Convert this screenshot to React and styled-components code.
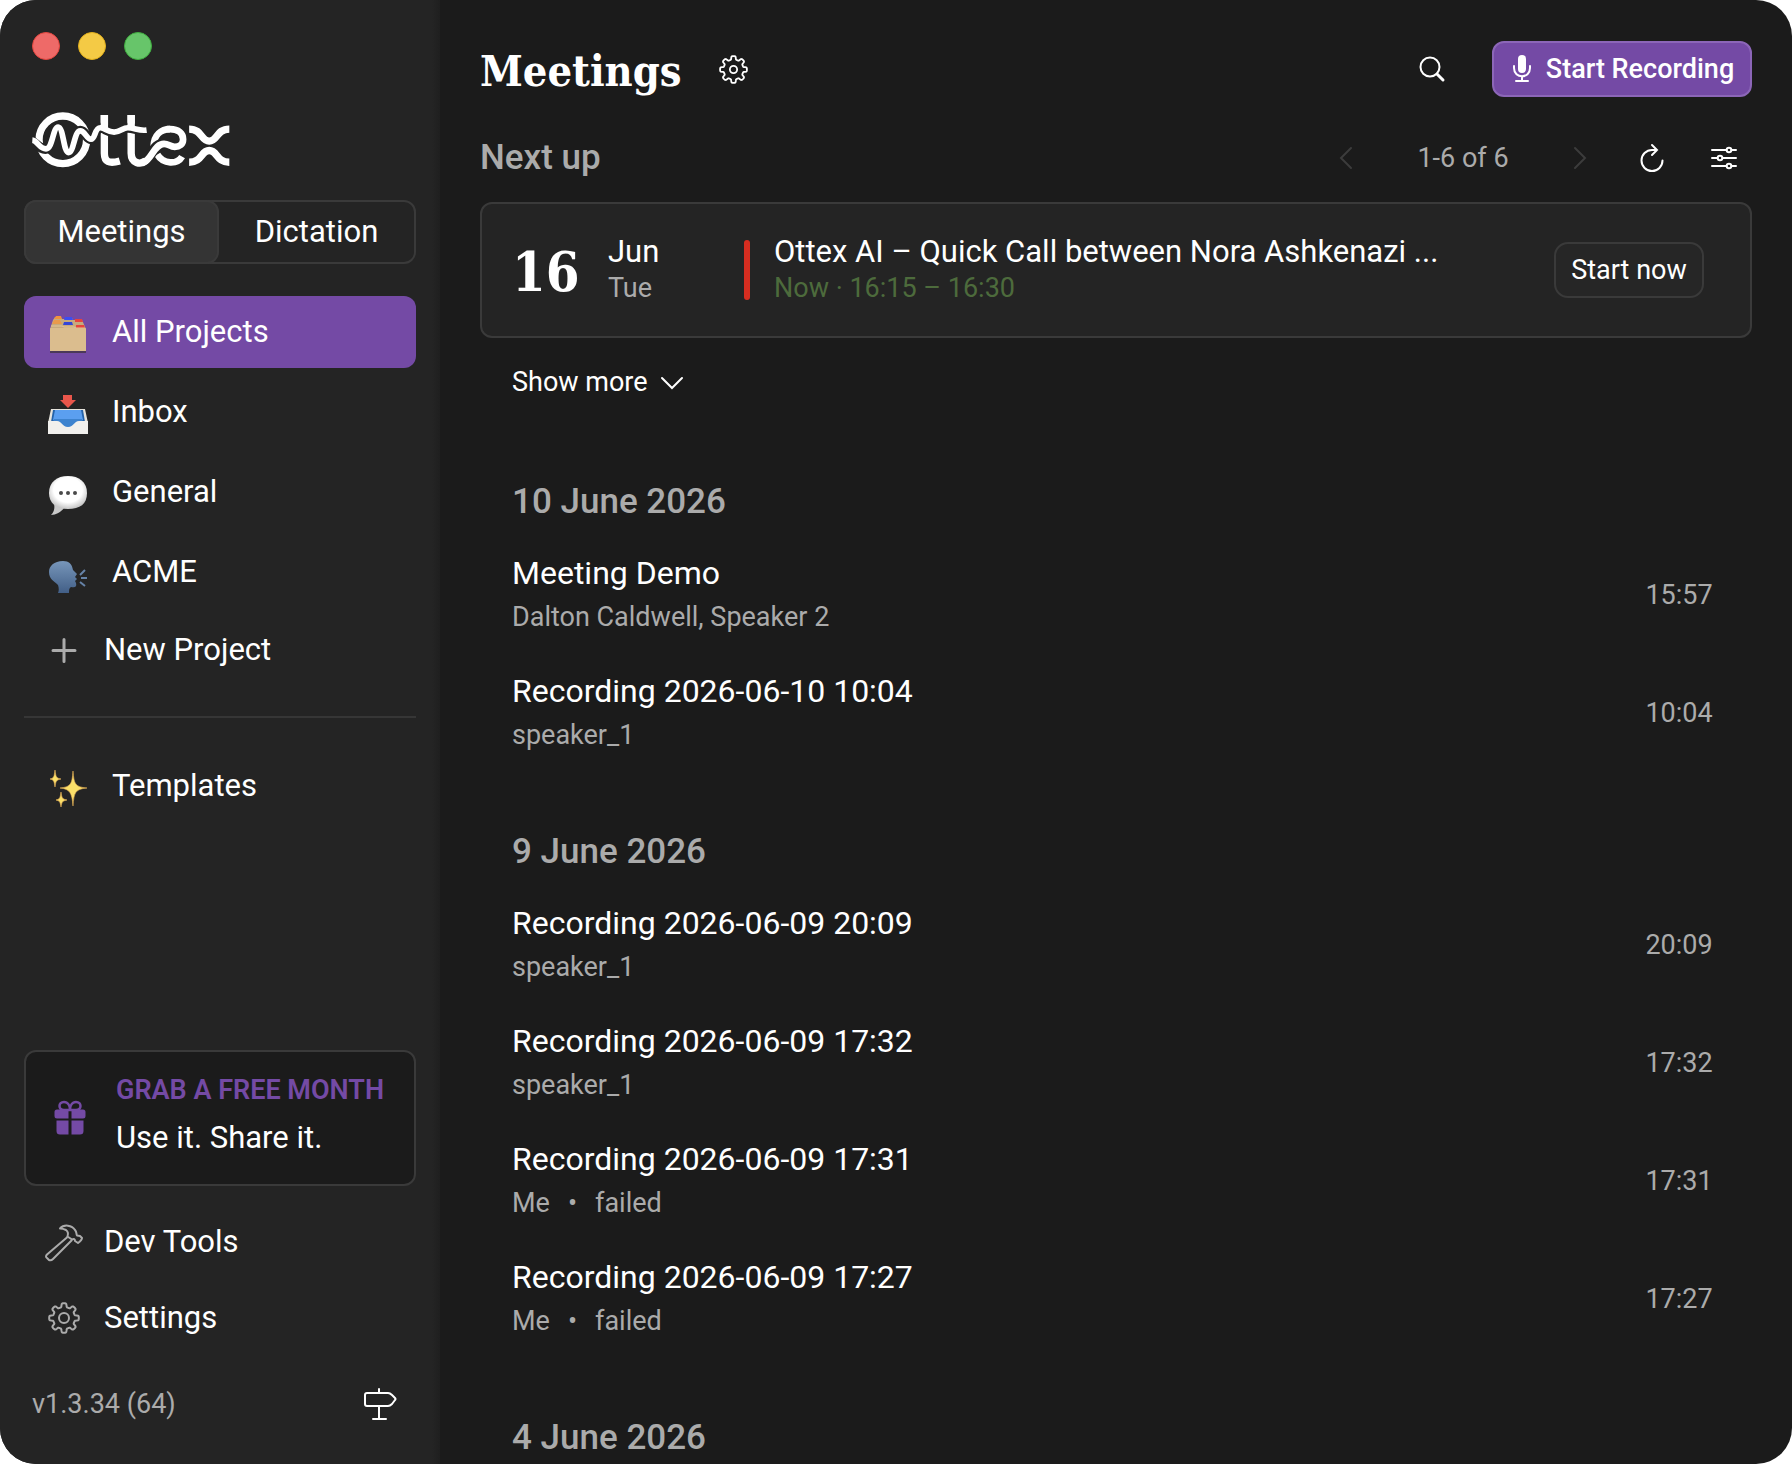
import React from "react";
import styled, { createGlobalStyle, ThemeProvider } from "styled-components";

const theme = {
  colors: {
    main: "#1b1b1b",
    panel: "#242424",
    segment: "#343434",
    border: "#3a3a3a",
    divider: "#363636",
    accent: "#744aa5",
    accentBorder: "#8c66b8",
    text: "#ffffff",
    muted: "#ababab",
    disabled: "#3c3c3c",
    now: "#4d6b3c",
    event: "#d62d20",
  },
  font: {
    body: `Roboto, "Liberation Sans", sans-serif`,
    display: `"Roboto Slab", "DejaVu Serif Condensed", "DejaVu Serif", serif`,
  },
};

const GlobalStyle = createGlobalStyle`
  * {
    box-sizing: border-box;
    margin: 0;
    padding: 0;
  }

  body {
    background: #ffffff;
  }

  button {
    font: inherit;
    color: inherit;
    background: none;
    border: none;
    cursor: pointer;
  }

  a {
    color: inherit;
    text-decoration: none;
  }

  ul {
    list-style: none;
  }

  svg {
    display: block;
    flex: none;
  }
`;

const Window = styled.div`
  display: flex;
  height: 100vh;
  overflow: hidden;
  border-radius: 36px;
  background: ${({ theme }) => theme.colors.main};
  color: ${({ theme }) => theme.colors.text};
  font-family: ${({ theme }) => theme.font.body};
  font-size: 32px;
  line-height: 40px;
`;

/* Sidebar */

const Sidebar = styled.aside`
  display: flex;
  flex-direction: column;
  flex: 0 0 440px;
  padding: 32px 24px;
  background: linear-gradient(to right, #242424 calc(100% - 8px), #1f1f1f);
  font-size: 31px;
`;

const TrafficLights = styled.div`
  display: flex;
  gap: 18px;
  padding-left: 8px;
`;

const Light = styled.button`
  width: 28px;
  height: 28px;
  border-radius: 50%;
  background: ${({ $color }) => $color};
  border: 1px solid ${({ $edge }) => $edge};
`;

const LogoLink = styled.a`
  margin: 52px 0 32px 8px;
`;

const Segmented = styled.div`
  display: flex;
  height: 64px;
  margin-bottom: 32px;
  border: 2px solid ${({ theme }) => theme.colors.border};
  border-radius: 12px;
`;

const Segment = styled.button`
  flex: 1 1 50%;
  margin: ${({ $active }) => ($active ? "-2px 0 -2px -2px" : "0")};
  border-radius: 12px;
  border: ${({ $active, theme }) => ($active ? `2px solid ${theme.colors.border}` : "none")};
  background: ${({ $active, theme }) => ($active ? theme.colors.segment : "transparent")};
`;

const NavList = styled.ul`
  display: flex;
  flex-direction: column;
  gap: 8px;
`;

const NavLink = styled.a`
  display: flex;
  align-items: center;
  gap: 24px;
  height: 72px;
  padding: 0 24px;
  border-radius: 12px;
  background: ${({ $active, theme }) => ($active ? theme.colors.accent : "transparent")};

  svg {
    margin-top: 6px;
  }
`;

const ToolButton = styled.button`
  display: flex;
  align-items: center;
  gap: 20px;
  width: 100%;
  height: ${({ $tall }) => ($tall ? "76px" : "68px")};
  padding: 0 20px;
  text-align: left;

  svg {
    color: ${({ theme }) => theme.colors.muted};
  }
`;

const Divider = styled.hr`
  flex: none;
  height: 2px;
  margin: 32px 0;
  border: none;
  background: ${({ theme }) => theme.colors.divider};
`;

const Promo = styled.a`
  display: flex;
  align-items: center;
  gap: 30px;
  height: 136px;
  margin: auto 0 18px;
  padding: 0 28px;
  border: 2px solid ${({ theme }) => theme.colors.border};
  border-radius: 12px;
  background: ${({ theme }) => theme.colors.main};
`;

const PromoText = styled.span`
  display: flex;
  flex-direction: column;
  gap: 8px;
  padding-bottom: 8px;
  white-space: nowrap;
`;

const PromoTitle = styled.strong`
  color: ${({ theme }) => theme.colors.accent};
  font-size: 27px;
  font-weight: 600;
`;

const Footer = styled.footer`
  display: flex;
  align-items: center;
  justify-content: space-between;
  height: 56px;
  margin-top: 20px;
  padding: 0 8px;
  color: ${({ theme }) => theme.colors.muted};
  font-size: 27px;
`;

/* Main column */

const Main = styled.main`
  flex: 1;
  min-width: 0;
  overflow: hidden;
  padding: 40px 40px 0;
`;

const Header = styled.header`
  display: flex;
  align-items: center;
  height: 58px;
  margin-bottom: 32px;
`;

const Title = styled.h1`
  margin-right: 24px;
  padding-top: 4px;
  font-family: ${({ theme }) => theme.font.display};
  font-size: 43px;
  font-weight: 700;
`;

const IconButton = styled.button`
  display: flex;
  align-items: center;
  justify-content: center;
  width: 56px;
  height: 56px;

  &:disabled {
    color: ${({ theme }) => theme.colors.disabled};
    cursor: default;
  }
`;

const RecordButton = styled.button`
  display: flex;
  align-items: center;
  justify-content: center;
  gap: 12px;
  width: 260px;
  height: 56px;
  margin-left: 32px;
  border: 2px solid ${({ theme }) => theme.colors.accentBorder};
  border-radius: 12px;
  background: ${({ theme }) => theme.colors.accent};
  font-size: 27px;
  font-weight: 500;
  white-space: nowrap;
`;

const Spacer = styled.div`
  flex: 1;
`;

const Toolbar = styled.div`
  display: flex;
  align-items: center;
  margin-bottom: 16px;
`;

const SectionTitle = styled.h2`
  color: ${({ theme }) => theme.colors.muted};
  font-size: 35px;
  font-weight: 500;
`;

const Pager = styled.div`
  display: flex;
  align-items: center;
  margin-right: 16px;
`;

const PageCount = styled.span`
  width: 178px;
  text-align: center;
  color: ${({ theme }) => theme.colors.muted};
  font-size: 27px;
`;

const ToolbarActions = styled.div`
  display: flex;
  gap: 16px;
`;

const EventCard = styled.article`
  display: grid;
  grid-template-columns: 96px 136px 6px minmax(0, 1fr) auto;
  align-items: center;
  height: 136px;
  padding: 0 46px 0 30px;
  border: 2px solid ${({ theme }) => theme.colors.border};
  border-radius: 12px;
  background: ${({ theme }) => theme.colors.panel};
`;

const Day = styled.span`
  padding-top: 4px;
  font-family: ${({ theme }) => theme.font.display};
  font-size: 54px;
  font-weight: 700;
`;

const Stack = styled.div`
  display: flex;
  flex-direction: column;
  min-width: 0;
  line-height: 36px;
  font-size: 31px;
`;

const EventBar = styled.span`
  height: 60px;
  border-radius: 3px;
  background: ${({ theme }) => theme.colors.event};
`;

const EventInfo = styled(Stack)`
  padding: 0 24px;
`;

const EventTitle = styled.h3`
  overflow: hidden;
  font-size: 31px;
  font-weight: 400;
  text-overflow: ellipsis;
  white-space: nowrap;
`;

const Small = styled.span`
  color: ${({ $now, theme }) => ($now ? theme.colors.now : theme.colors.muted)};
  font-size: 27px;
`;

const StartButton = styled.button`
  width: 150px;
  height: 56px;
  border: 2px solid ${({ theme }) => theme.colors.border};
  border-radius: 14px;
  background: #262626;
  font-size: 27px;
`;

const ShowMore = styled.button`
  display: flex;
  align-items: center;
  gap: 12px;
  height: 56px;
  margin: 16px 32px 12px;
  font-size: 27px;
`;

const Group = styled.section`
  padding: 60px 32px 0;
`;

const GroupTitle = styled(SectionTitle)`
  margin-bottom: 14px;
`;

const MeetingLink = styled.a`
  display: flex;
  align-items: center;
  justify-content: space-between;
  height: 118px;
`;

const MeetingText = styled.div`
  display: flex;
  flex-direction: column;
  gap: 4px;
`;

const Meta = styled.span`
  display: flex;
  gap: 18px;
  color: ${({ theme }) => theme.colors.muted};
  font-size: 27px;
`;

const Time = styled.time`
  width: 82px;
  text-align: center;
  color: ${({ theme }) => theme.colors.muted};
  font-size: 27px;
`;

/* Icons */

// Eight soft teeth around a circle, sampled as a closed outline
const gearOutline = (() => {
  const points = [];
  for (let i = 0; i < 160; i++) {
    const a = (i / 160) * Math.PI * 2;
    const r = 12.9 + 1.9 * Math.tanh(3 * Math.cos(8 * a));
    points.push(`${(16 + r * Math.sin(a)).toFixed(2)} ${(16 - r * Math.cos(a)).toFixed(2)}`);
  }
  return `M${points.join("L")}Z`;
})();

const Gear = ({ size, inset = 0, hole = 5 }) => (
  <svg
    width={size}
    height={size}
    viewBox={`${-inset} ${-inset} ${32 + inset * 2} ${32 + inset * 2}`}
    fill="none"
    stroke="currentColor"
    strokeWidth="2"
    strokeLinejoin="round"
  >
    <path d={gearOutline} />
    <circle cx="16" cy="16" r={hole} />
  </svg>
);

const Logo = () => (
  <svg width="198" height="56" viewBox="38 37 591 167" fill="none" stroke="#fff" strokeWidth="22" role="img" aria-label="Ottex">
    <circle cx="130" cy="120" r="71" />
    <path d="M254 46V160C254 186 268 192 300 183" />
    <path d="M334 46V160C334 190 362 196 378 182" />
    <path d="M401 140C402 104 424 88 450 88" strokeWidth="20" />
    <path d="M412 164C430 194 472 194 486 170" strokeWidth="20" />
    <path
      d="M24 117C42 120 54 147 78 147C100 147 100 82 116 82C132 82 132 158 147 158C163 158 164 93 182 93C196 93 201 118 214 118C228 118 224 84 242 84C256 84 264 97 283 97C302 97 308 84 324 84C344 84 356 94 390 91"
      stroke="#242424"
      strokeWidth="30"
    />
    <path d="M254 46V88M334 46V88" />
    <path
      d="M39 121C54 122 60 147 80 147C100 147 100 82 116 82C132 82 132 158 147 158C163 158 164 93 182 93C196 93 201 118 214 118C228 118 224 84 242 84C256 84 264 97 283 97C302 97 308 84 324 84C344 84 356 94 380 91"
      strokeWidth="17"
    />
    <path d="M392 164C404 144 414 131 436 131" stroke="#242424" strokeWidth="31" />
    <path
      d="M440 88H450C476 88 489 101 489 118C489 134 478 141 464 141C450 141 446 132 432 132C408 132 400 162 382 180C376 186 370 187 362 187"
      strokeWidth="20"
    />
    <path d="M507 88C546 88 542 124 567 124C592 124 588 88 627 88M507 187C546 187 542 152 567 152C592 152 588 187 627 187" />
  </svg>
);

const FolderIcon = () => (
  <svg width="40" height="40" viewBox="0 0 40 40">
    <path d="M5 5L7 2H12L14 4H17L18 3H24L25 5H34L38 14H2Z" fill="#c7aa7d" />
    <path d="M8 1H13L14 4H6Z" fill="#f0923f" />
    <path d="M17 2H24L25 5H16Z" fill="#3d4df0" />
    <path d="M27 4H34L35 7H27Z" fill="#e8433d" />
    <path d="M6 5H12L14 9H4Z" fill="#e99a4c" />
    <path d="M16 7H24L25 10H15Z" fill="#3346d8" />
    <path d="M28 10H36L37 13H28Z" fill="#e8433d" />
    <path d="M3 11H14L16 12H26L28 13H37" fill="none" stroke="#e3c79a" />
    <rect x="2" y="13" width="36" height="24" rx="1" fill="#dbbd8e" />
    <path d="M2 37H38" stroke="#4b3858" strokeWidth="2" />
  </svg>
);

const InboxIcon = () => (
  <svg width="40" height="40" viewBox="0 0 40 40">
    <path d="M3 14H37L40 28V39H0V28Z" fill="#e5e3dc" />
    <path d="M5 15H35L37 27H3Z" fill="#2462a8" />
    <path d="M7 15H33L35 25H5Z" fill="#5b9ff0" />
    <path d="M6 24H34L37 32H3Z" fill="#3d83cf" />
    <path d="M0 26H9C14 26 14 32 20 32C26 32 26 26 31 26H40V39H0Z" fill="#f1f0ed" />
    <path d="M15 0H24V5H28L20 13L12 5H15Z" fill="#e9564b" />
  </svg>
);

const ChatIcon = () => (
  <svg width="40" height="40" viewBox="0 0 40 40">
    <defs>
      <radialGradient id="bubble" cx="50%" cy="42%" r="58%">
        <stop offset="65%" stopColor="#ffffff" />
        <stop offset="100%" stopColor="#c6c6c6" />
      </radialGradient>
    </defs>
    <path d="M6 29C7 33 6 37 3 40C8 40 13 37 16 33Z" fill="#c9c9c9" />
    <path d="M20 1C31 1 39 7 39 18C39 29 32 34 20 34C8 34 1 28 1 18C1 7 9 1 20 1Z" fill="url(#bubble)" />
    <g fill="#4a4a4a">
      <circle cx="13" cy="18" r="2" />
      <circle cx="20" cy="18" r="2" />
      <circle cx="27" cy="18" r="2" />
    </g>
  </svg>
);

const SpeakingIcon = () => (
  <svg width="40" height="40" viewBox="0 0 40 40">
    <defs>
      <linearGradient id="head" x1="0" y1="0" x2="0" y2="1">
        <stop offset="0%" stopColor="#7796ba" />
        <stop offset="100%" stopColor="#425f87" />
      </linearGradient>
    </defs>
    <path
      d="M15 6C6 6 1 11 1 17C1 24 6 26 10 30C11 33 11 36 10 38H21C21 35 21 33 23 32C27 33 29 32 28 28L27 26L29 24L27 22L29 19L25 15C24 9 21 6 15 6Z"
      fill="url(#head)"
    />
    <path d="M32 20L37 15M33 23H39M32 27L37 31" stroke="#6683a8" strokeWidth="2" />
  </svg>
);

const SparklesIcon = () => (
  <svg width="40" height="40" viewBox="0 0 40 40" fill="#fbe06a" stroke="#e6ae55" strokeWidth="0.6">
    <path d="M25 2C26 15 27 18 39 19C27 20 26 24 25 37C24 24 22 20 12 19C23 18 24 15 25 2Z" />
    <path d="M7 1C8 8 8 9 13 10C8 11 8 12 7 18C6 12 6 11 2 10C6 9 6 8 7 1Z" />
    <path d="M13 23C14 29 14 30 19 31C14 32 14 33 13 38C12 33 12 32 8 31C12 30 12 29 13 23Z" />
  </svg>
);

const PlusIcon = () => (
  <svg width="40" height="40" viewBox="0 0 40 40" stroke="currentColor" strokeWidth="3" strokeLinecap="round">
    <path d="M20 9.500V31.500M9 20.500H31" />
  </svg>
);

const HammerIcon = () => (
  <svg width="40" height="40" viewBox="0 0 40 40" fill="none" stroke="currentColor" strokeWidth="2" strokeLinejoin="round">
    <path d="M23.500 15L3 32.500Q1 34.500 3 36L5 38Q7 39 9 37L28 18" />
    <path d="M16 6.500C20 2 28 3 31 8C33 10 32 12 33 13.500L36 14L38 16Q38 18 34 21L31 19Q31 16 28 17.500L23.500 14.500Q25 10 22 8Q19 6.500 16 6.500Z" />
  </svg>
);

const GiftIcon = () => (
  <svg width="32" height="36" viewBox="0 0 32 36">
    <path d="M16 10H10C4 10 4 2 10 2C14 2 16 6 16 10ZM16 10H22C28 10 28 2 22 2C18 2 16 6 16 10Z" fill="none" stroke="#744aa5" strokeWidth="2.500" />
    <path d="M3 9.500H14.500V18.500H3Q0.500 18.500 0.500 16V12Q0.500 9.500 3 9.500ZM17.500 9.500H29Q31.500 9.500 31.500 12V16Q31.500 18.500 29 18.500H17.500ZM2.500 20.500H14.500V34.500H6Q2.500 34.500 2.500 31ZM17.500 20.500H29.500V31Q29.500 34.500 26 34.500H17.500Z" fill="#744aa5" />
  </svg>
);

const SignpostIcon = () => (
  <svg width="36" height="36" viewBox="0 0 36 36" fill="none" stroke="#fff" strokeWidth="2" strokeLinecap="round" strokeLinejoin="round">
    <path d="M5 7H26Q28 7 30 9L33 12Q34 13 33 14L30 18Q28 20 26 20H5Q3 20 3 18V9Q3 7 5 7ZM17 3V7M17 20V33M11 33H24" />
  </svg>
);

const SearchIcon = () => (
  <svg width="28" height="28" viewBox="0 0 28 28" fill="none" stroke="currentColor" strokeWidth="2" strokeLinecap="round">
    <circle cx="12" cy="12" r="9.500" />
    <path d="M19 19L25 25" strokeWidth="3" />
  </svg>
);

const MicIcon = () => (
  <svg width="24" height="32" viewBox="0 0 24 32" fill="none" stroke="currentColor" strokeWidth="2" strokeLinecap="round">
    <rect x="8" y="2" width="8" height="18" rx="4" fill="currentColor" stroke="none" />
    <path d="M4 13V15C4 26 20 26 20 15V13M12 24V28M6 28H18" />
  </svg>
);

const Chevron = ({ d }) => (
  <svg width="24" height="24" viewBox="0 0 24 24" fill="none" stroke="currentColor" strokeWidth="2" strokeLinecap="round">
    <path d={d} />
  </svg>
);

const RefreshIcon = () => (
  <svg width="28" height="32" viewBox="0 0 28 32" fill="none" stroke="currentColor" strokeWidth="2" strokeLinecap="round">
    <path d="M19 8H14A10.500 10.500 0 1 0 24.500 18.500M14 3L19 8L14 13" />
  </svg>
);

const SlidersIcon = () => (
  <svg width="28" height="28" viewBox="0 0 28 28" fill="none" stroke="currentColor" strokeWidth="2" strokeLinecap="round">
    <path d="M2 6H16M22 6H26M2 14H7M13 14H26M2 22H16M22 22H26" />
    <circle cx="19" cy="6" r="2.300" />
    <circle cx="10" cy="14" r="2.300" />
    <circle cx="19" cy="22" r="2.300" />
  </svg>
);

/* Data */

const projects = [
  { name: "All Projects", icon: <FolderIcon />, active: true },
  { name: "Inbox", icon: <InboxIcon /> },
  { name: "General", icon: <ChatIcon /> },
  { name: "ACME", icon: <SpeakingIcon /> },
];

const groups = [
  {
    date: "10 June 2026",
    meetings: [
      { title: "Meeting Demo", meta: ["Dalton Caldwell, Speaker 2"], time: "15:57" },
      { title: "Recording 2026-06-10 10:04", meta: ["speaker_1"], time: "10:04" },
    ],
  },
  {
    date: "9 June 2026",
    meetings: [
      { title: "Recording 2026-06-09 20:09", meta: ["speaker_1"], time: "20:09" },
      { title: "Recording 2026-06-09 17:32", meta: ["speaker_1"], time: "17:32" },
      { title: "Recording 2026-06-09 17:31", meta: ["Me", "•", "failed"], time: "17:31" },
      { title: "Recording 2026-06-09 17:27", meta: ["Me", "•", "failed"], time: "17:27" },
    ],
  },
  { date: "4 June 2026", meetings: [] },
];

const App = () => {
  return (
    <ThemeProvider theme={theme}>
      <GlobalStyle />
      <Window>
        <Sidebar>
          <TrafficLights>
            <Light $color="#ee6a68" $edge="#e2463f" aria-label="Close" />
            <Light $color="#f4ca45" $edge="#e3b01c" aria-label="Minimize" />
            <Light $color="#67c56a" $edge="#3fae3f" aria-label="Zoom" />
          </TrafficLights>
          <LogoLink href="#home">
            <Logo />
          </LogoLink>
          <Segmented>
            <Segment $active>Meetings</Segment>
            <Segment>Dictation</Segment>
          </Segmented>
          <nav>
            <NavList>
              {projects.map((project) => (
                <li key={project.name}>
                  <NavLink href="#project" $active={project.active}>
                    {project.icon}
                    {project.name}
                  </NavLink>
                </li>
              ))}
              <li>
                <ToolButton>
                  <PlusIcon />
                  New Project
                </ToolButton>
              </li>
            </NavList>
            <Divider />
            <NavLink href="#templates">
              <SparklesIcon />
              Templates
            </NavLink>
          </nav>
          <Promo href="#promo">
            <GiftIcon />
            <PromoText>
              <PromoTitle>GRAB A FREE MONTH</PromoTitle>
              Use it. Share it.
            </PromoText>
          </Promo>
          <ToolButton $tall>
            <HammerIcon />
            Dev Tools
          </ToolButton>
          <ToolButton $tall>
            <Gear size={40} inset={4} />
            Settings
          </ToolButton>
          <Footer>
            v1.3.34 (64)
            <IconButton aria-label="Roadmap">
              <SignpostIcon />
            </IconButton>
          </Footer>
        </Sidebar>

        <Main>
          <Header>
            <Title>Meetings</Title>
            <IconButton aria-label="Meeting settings">
              <Gear size={29} hole={4} />
            </IconButton>
            <Spacer />
            <IconButton aria-label="Search">
              <SearchIcon />
            </IconButton>
            <RecordButton>
              <MicIcon />
              Start Recording
            </RecordButton>
          </Header>

          <Toolbar>
            <SectionTitle>Next up</SectionTitle>
            <Spacer />
            <Pager>
              <IconButton disabled aria-label="Previous">
                <Chevron d="M17 2L7 12L17 22" />
              </IconButton>
              <PageCount>1-6 of 6</PageCount>
              <IconButton disabled aria-label="Next">
                <Chevron d="M7 2L17 12L7 22" />
              </IconButton>
            </Pager>
            <ToolbarActions>
              <IconButton aria-label="Refresh">
                <RefreshIcon />
              </IconButton>
              <IconButton aria-label="Filters">
                <SlidersIcon />
              </IconButton>
            </ToolbarActions>
          </Toolbar>

          <EventCard>
            <Day>16</Day>
            <Stack>
              <span>Jun</span>
              <Small>Tue</Small>
            </Stack>
            <EventBar />
            <EventInfo>
              <EventTitle>Ottex AI – Quick Call between Nora Ashkenazi ...</EventTitle>
              <Small $now>Now · 16:15 – 16:30</Small>
            </EventInfo>
            <StartButton>Start now</StartButton>
          </EventCard>

          <ShowMore>
            Show more
            <Chevron d="M2 8L12 18L22 8" />
          </ShowMore>

          {groups.map((group) => (
            <Group key={group.date}>
              <GroupTitle>{group.date}</GroupTitle>
              <ul>
                {group.meetings.map((meeting) => (
                  <li key={meeting.title}>
                    <MeetingLink href="#meeting">
                      <MeetingText>
                        <span>{meeting.title}</span>
                        <Meta>
                          {meeting.meta.map((part) => (
                            <span key={part}>{part}</span>
                          ))}
                        </Meta>
                      </MeetingText>
                      <Time>{meeting.time}</Time>
                    </MeetingLink>
                  </li>
                ))}
              </ul>
            </Group>
          ))}
        </Main>
      </Window>
    </ThemeProvider>
  );
};

export default App;
